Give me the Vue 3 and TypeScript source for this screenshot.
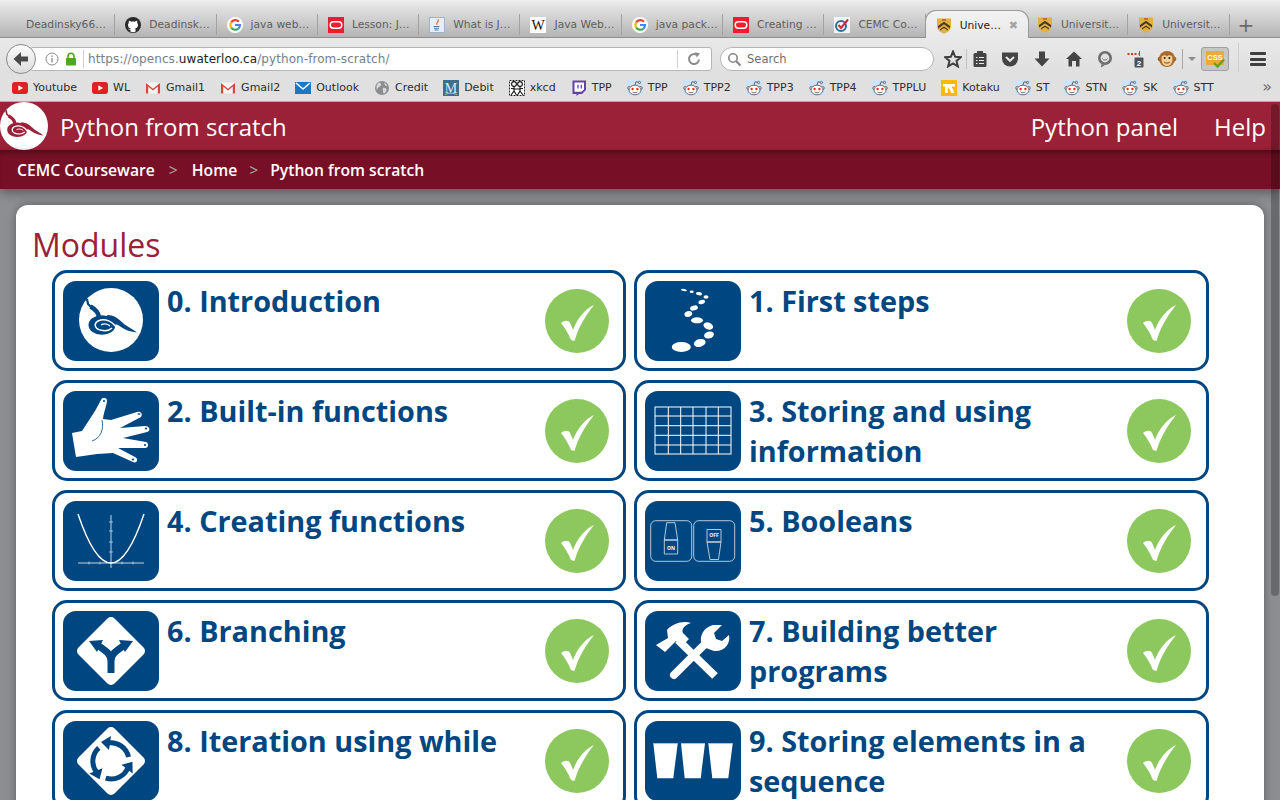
<script setup lang="ts">
interface Tab {
  title: string
  icon?: string
  active?: boolean
}

interface Bookmark {
  label: string
  icon: string
}

interface Module {
  title: string
  icon: string
}

const tabs: Tab[] = [
  { title: 'Deadinsky66…' },
  { title: 'Deadinsk…', icon: 'fav-github' },
  { title: 'java web…', icon: 'fav-google' },
  { title: 'Lesson: J…', icon: 'fav-oracle' },
  { title: 'What is J…', icon: 'fav-java' },
  { title: 'Java Web…', icon: 'fav-wiki' },
  { title: 'java pack…', icon: 'fav-google' },
  { title: 'Creating …', icon: 'fav-oracle' },
  { title: 'CEMC Co…', icon: 'fav-cemc' },
  { title: 'Unive…', icon: 'fav-shield', active: true },
  { title: 'Universit…', icon: 'fav-shield' },
  { title: 'Universit…', icon: 'fav-shield' },
]

const bookmarks: Bookmark[] = [
  { label: 'Youtube', icon: 'fav-youtube' },
  { label: 'WL', icon: 'fav-youtube' },
  { label: 'Gmail1', icon: 'fav-gmail' },
  { label: 'Gmail2', icon: 'fav-gmail' },
  { label: 'Outlook', icon: 'fav-outlook' },
  { label: 'Credit', icon: 'fav-globe' },
  { label: 'Debit', icon: 'fav-debit' },
  { label: 'xkcd', icon: 'fav-xkcd' },
  { label: 'TPP', icon: 'fav-twitch' },
  { label: 'TPP', icon: 'fav-reddit' },
  { label: 'TPP2', icon: 'fav-reddit' },
  { label: 'TPP3', icon: 'fav-reddit' },
  { label: 'TPP4', icon: 'fav-reddit' },
  { label: 'TPPLU', icon: 'fav-reddit' },
  { label: 'Kotaku', icon: 'fav-kotaku' },
  { label: 'ST', icon: 'fav-reddit' },
  { label: 'STN', icon: 'fav-reddit' },
  { label: 'SK', icon: 'fav-reddit' },
  { label: 'STT', icon: 'fav-reddit' },
]

const modules: Module[] = [
  { title: '0. Introduction', icon: 'mod-snake' },
  { title: '1. First steps', icon: 'mod-steps' },
  { title: '2. Built-in functions', icon: 'mod-hand' },
  { title: '3. Storing and using information', icon: 'mod-grid' },
  { title: '4. Creating functions', icon: 'mod-parabola' },
  { title: '5. Booleans', icon: 'mod-switch' },
  { title: '6. Branching', icon: 'mod-branch' },
  { title: '7. Building better programs', icon: 'mod-tools' },
  { title: '8. Iteration using while', icon: 'mod-loop' },
  { title: '9. Storing elements in a sequence', icon: 'mod-cups' },
]
</script>

<template>
  <div class="window">
    <svg class="sprites" aria-hidden="true">
      <defs>
        <symbol id="snake" viewBox="0 0 64 64">
          <path d="M8 11 L9 16 L12 19" fill="none" stroke="currentColor" stroke-width="2.2" />
          <path d="M11.5 18.5 C15 20.5 19 23 20 29" fill="none" stroke="currentColor" stroke-width="4.4" />
          <path d="M28 27 C36 27 41 32 45 36 C49 39 53 41 58 44.5 C52 44 46 42 42 39 C38 36 34 35 30 35 Z" fill="currentColor" />
          <ellipse cx="23" cy="37" rx="13.5" ry="9.8" fill="currentColor" />
          <path d="M38 41 C34 33 26 30 19 33 C14 36 16 42 24 42.5 C28 43 31 42 33 40" fill="none" stroke="var(--snake-bg)" stroke-width="1.5" />
          <path d="M22 37 C25 35 29 36 31 38" fill="none" stroke="var(--snake-bg)" stroke-width="1.2" />
        </symbol>

        <symbol id="mod-snake" viewBox="0 0 96 80">
          <circle cx="48" cy="39" r="32" fill="#fff" />
          <use href="#snake" x="16" y="7" width="64" height="64" style="color:#004680;--snake-bg:#fff" />
        </symbol>
        <symbol id="mod-steps" viewBox="0 0 96 80">
          <g fill="#fff">
            <ellipse cx="36.3" cy="66" rx="9.5" ry="5" />
            <ellipse cx="54.7" cy="62" rx="6" ry="3.8" transform="rotate(-15 54.7 62)" />
            <ellipse cx="64" cy="54" rx="5" ry="3.4" transform="rotate(-15 64 54)" />
            <ellipse cx="63.3" cy="45" rx="5" ry="3.4" transform="rotate(20 63.3 45)" />
            <ellipse cx="52" cy="39.3" rx="6" ry="3" />
            <ellipse cx="43.3" cy="33" rx="4" ry="2.8" transform="rotate(-20 43.3 33)" />
            <ellipse cx="49" cy="27" rx="4" ry="2.4" transform="rotate(-15 49 27)" />
            <ellipse cx="56.7" cy="21" rx="3.4" ry="2.1" transform="rotate(-15 56.7 21)" />
            <ellipse cx="61" cy="16" rx="2.5" ry="1.7" />
            <ellipse cx="54" cy="12.7" rx="3" ry="1.6" transform="rotate(10 54 12.7)" />
            <ellipse cx="46.7" cy="10.7" rx="2" ry="1.2" />
            <ellipse cx="39" cy="9" rx="3" ry="1" transform="rotate(12 39 9)" />
          </g>
        </symbol>
        <symbol id="mod-hand" viewBox="0 0 96 80">
          <path fill="#fff" d="M9 42 L19 40 L32 20 L38 9 C39 6 43 6 44 9 C44 14 41 20 40 28 L48 29 L74 21 C78 20 80 23 78 26 L57 37 L82 35 C87 35 88 40 84 41 L60 47 L83 51 C86 52 86 57 82 57 L55 57 L72 66 C76 68 74 73 70 71 L50 62 L34 63 L13 66 Z" />
          <path fill="none" stroke="#004680" stroke-width="0.8" d="M39 29 C41 38 38 47 29 50" />
          <g fill="#004680">
            <circle cx="41" cy="10" r="1" />
            <ellipse cx="76" cy="23" rx="1.6" ry="0.8" />
            <circle cx="83" cy="37.5" r="1.1" />
            <circle cx="82" cy="54" r="1.1" />
            <circle cx="70" cy="68.5" r="1.1" />
          </g>
        </symbol>
        <symbol id="mod-grid" viewBox="0 0 96 80">
          <g fill="none" stroke="#fff" stroke-width="1">
            <rect x="10" y="16" width="76" height="47" />
            <path d="M23.3 16V63M35.7 16V63M48 16V63M61 16V63M73.3 16V63M10 25H86M10 34.7H86M10 44.3H86M10 54H86" />
          </g>
        </symbol>
        <symbol id="mod-parabola" viewBox="0 0 96 80">
          <path d="M48 14V67M15 62H81" fill="none" stroke="#c8d5e2" stroke-width="1" />
          <path d="M26 60.5V63.5M37 60.5V63.5M59 60.5V63.5M70 60.5V63.5M46 21H50M46 30H50M46 41H50M46 51H50" fill="none" stroke="#c8d5e2" stroke-width="0.8" />
          <path d="M15 13 Q48 111 81 13" fill="none" stroke="#fff" stroke-width="1.4" />
        </symbol>
        <symbol id="mod-switch" viewBox="0 0 96 80">
          <g fill="none" stroke="#c8d5e2" stroke-width="0.9">
            <rect x="5.7" y="19.7" width="41" height="40.6" rx="5" />
            <rect x="48.7" y="19.7" width="41" height="40.6" rx="5" />
            <path d="M21.7 21.7H30L32.7 39V53H19.3V39Z" />
            <path d="M19.3 39H32.7" stroke-width="1.6" />
            <path d="M62 28.5H76V41L73.5 58.5H65L62 41Z" />
            <path d="M62 41H76" stroke-width="1.6" />
          </g>
          <text x="26" y="49" class="switch-label">ON</text>
          <text x="69" y="36" class="switch-label">OFF</text>
        </symbol>
        <symbol id="mod-branch" viewBox="0 0 96 80">
          <rect x="22.5" y="14.5" width="51" height="51" rx="5" fill="#fff" transform="rotate(45 48 40)" />
          <path d="M48 62V50C48 42 41 39 33 33M48 50C48 42 55 39 63 33" fill="none" stroke="#004680" stroke-width="7" />
          <path d="M26 30L40 29L34 41ZM70 30L56 29L62 41Z" fill="#004680" />
        </symbol>
        <symbol id="mod-tools" viewBox="0 0 96 80">
          <g fill="#fff">
            <path d="M11 34 L23 27 L22 19 C27 13 38 9 46 12 C40 14 36 18 38 22 L44 28 L37 35 L31 30 L20 41 Z" />
            <path d="M33 29 L70 65" stroke="#fff" stroke-width="8" />
            <path d="M29 64 L62 31" stroke="#fff" stroke-width="8" stroke-linecap="round" />
            <path d="M58 36 C53 28 57 17 68 14 L77 14 L69 22 L71 28 L77 30 L84 24 C86 33 79 41 69 40 Z" />
          </g>
        </symbol>
        <symbol id="mod-loop" viewBox="0 0 96 80">
          <rect x="22.5" y="14.5" width="51" height="51" rx="5" fill="#fff" transform="rotate(45 48 40)" />
          <g id="loop-arrow" fill="#004680">
            <path d="M65.5 36 A18 18 0 0 0 45 22" fill="none" stroke="#004680" stroke-width="5" />
            <path d="M38 21 L48 15 L46 29 Z" />
          </g>
          <use href="#loop-arrow" transform="rotate(-120 48 40)" />
          <use href="#loop-arrow" transform="rotate(120 48 40)" />
        </symbol>
        <symbol id="mod-cups" viewBox="0 0 96 80">
          <g fill="#fff">
            <path d="M8.3 22.3H32.7L28.3 57.3H12.3Z" />
            <path d="M36 22.3H60L55.7 57.3H39.7Z" />
            <path d="M63.3 22.3H87.7L83.3 57.3H67.3Z" />
          </g>
          <path d="M8.3 22.6H32.7M36 22.6H60M63.3 22.6H87.7" stroke="#9fb9d0" stroke-width="0.7" />
        </symbol>

        <symbol id="fav-github" viewBox="0 0 16 16">
          <circle cx="8" cy="8" r="8" fill="#2a2a2a" />
          <path fill="#fff" d="M5.5 14.8V12.6C3.4 13 3 11.6 3 11.6L4.4 12C5 12.4 5.5 12 5.7 11.3C4 11 3 10 3 8C3 7.2 3.3 6.4 3.8 5.9C3.6 5.2 3.7 4.4 4 3.8C4.8 3.8 5.6 4.2 6.2 4.7C7.4 4.4 8.6 4.4 9.8 4.7C10.4 4.2 11.2 3.8 12 3.8C12.3 4.4 12.4 5.2 12.2 5.9C12.7 6.4 13 7.2 13 8C13 10 12 11 10.3 11.3C10.5 11.7 10.5 12.2 10.5 12.6V14.8C8.8 15.4 7.2 15.4 5.5 14.8Z" />
        </symbol>
        <symbol id="fav-google" viewBox="0 0 16 16">
          <circle cx="8" cy="8" r="8" fill="#fff" />
          <g fill="none" stroke-width="2.2">
            <path d="M11.9 4.6A5 5 0 0 0 4.2 5.4" stroke="#ea4335" />
            <path d="M4.2 5.4A5 5 0 0 0 4.2 10.6" stroke="#fbbc05" />
            <path d="M4.2 10.6A5 5 0 0 0 11.6 11.5" stroke="#34a853" />
            <path d="M11.6 11.5A5 5 0 0 0 13 8H8" stroke="#4285f4" />
          </g>
        </symbol>
        <symbol id="fav-oracle" viewBox="0 0 16 16">
          <rect width="16" height="16" fill="#ee1c2e" />
          <rect x="2.2" y="4.8" width="11.6" height="6.4" rx="3.2" fill="none" stroke="#fff" stroke-width="1.5" />
        </symbol>
        <symbol id="fav-java" viewBox="0 0 16 16">
          <rect x="0.5" y="0.5" width="15" height="15" fill="#e6edf5" stroke="#9db4cc" />
          <path d="M9 2C10 4 6.5 5 8 8C7 5.8 11 5 9 2Z" fill="#d9652b" stroke="#d9652b" stroke-width="0.5" />
          <path d="M4.5 9.5H10.5M5 11.3H10M5.5 13H9.5" stroke="#4a6f96" stroke-width="0.9" />
        </symbol>
        <symbol id="fav-wiki" viewBox="0 0 16 16">
          <rect width="16" height="16" fill="#fff" />
          <text x="8" y="12.5" class="wiki-w">W</text>
        </symbol>
        <symbol id="fav-cemc" viewBox="0 0 16 16">
          <rect width="16" height="16" fill="#f3f3f3" />
          <circle cx="7" cy="9" r="5" fill="none" stroke="#2a6f9e" stroke-width="2" />
          <path d="M4.5 8L7 11L14 2.5" fill="none" stroke="#d3263a" stroke-width="2" />
        </symbol>
        <symbol id="fav-shield" viewBox="0 0 16 16">
          <path d="M1 0.5H15V8C15 12 11.5 14.5 8 15.8C4.5 14.5 1 12 1 8Z" fill="#e3b040" />
          <path d="M2 8L8 3.8L14 8V10.4L8 6.2L2 10.4ZM4 11.2L8 8.4L12 11.2V12.6L8 10L4 12.6Z" fill="#46391f" />
          <path d="M6 1.4H10V2.6H6Z" fill="#b5452f" />
        </symbol>
        <symbol id="fav-youtube" viewBox="0 0 16 16">
          <rect y="2" width="16" height="12" rx="3" fill="#e02020" />
          <path d="M6.3 5.2L11 8L6.3 10.8Z" fill="#fff" />
        </symbol>
        <symbol id="fav-gmail" viewBox="0 0 16 16">
          <rect x="1" y="2.5" width="14" height="11" fill="#f4f4f4" />
          <path d="M1 13.5V3L8 8.8L15 3V13.5H12.8V6.5L8 10.5L3.2 6.5V13.5Z" fill="#d8473a" />
        </symbol>
        <symbol id="fav-outlook" viewBox="0 0 16 16">
          <rect y="2" width="16" height="12" fill="#1a78c8" />
          <path d="M1 3L8 9L15 3" fill="none" stroke="#fff" stroke-width="1.6" />
        </symbol>
        <symbol id="fav-globe" viewBox="0 0 16 16">
          <circle cx="8" cy="8" r="7" fill="#8b8d8f" />
          <path d="M5 2.5C7 3 8 4.5 6.5 6C5 7 3.5 7.5 3 10C2 8 2.5 4 5 2.5ZM9 8C11 7.5 13 8.5 12.5 10.5C12 12.5 10.5 13.5 9.5 13.5C9 12 8.5 10 9 8ZM10 2.5C11.5 3 13 4.5 13.5 6L11 5.5Z" fill="#d7d8d9" />
        </symbol>
        <symbol id="fav-debit" viewBox="0 0 16 16">
          <rect width="16" height="16" fill="#3c6e8f" />
          <text x="8" y="12.5" class="debit-m">M</text>
          <path d="M2 14.5C6 12.8 10 12.8 14 14.5" fill="none" stroke="#e5b84a" stroke-width="0.9" />
        </symbol>
        <symbol id="fav-xkcd" viewBox="0 0 16 16">
          <rect width="16" height="16" fill="#fff" />
          <g fill="none" stroke="#111" stroke-width="1.1">
            <circle cx="5" cy="4" r="2.4" />
            <circle cx="11" cy="4" r="2.4" />
            <path d="M5 6.5V11L2 15M5 11L7.5 15M2 8.5L8 9M11 6.5V11L8.5 15M11 11L14 15M8 9L14 8.5" />
          </g>
          <rect x="0.5" y="0.5" width="15" height="15" fill="none" stroke="#222" stroke-dasharray="2 1" />
        </symbol>
        <symbol id="fav-twitch" viewBox="0 0 16 16">
          <path d="M1.5 0.5H15V10L11 14H8L5.5 16V14H1.5Z" fill="#6441a4" />
          <path d="M3.5 2.5H13V9.3L10.5 11.8H3.5Z" fill="#fff" />
          <path d="M7 4.8V8.5M10.3 4.8V8.5" stroke="#6441a4" stroke-width="1.3" />
        </symbol>
        <symbol id="fav-reddit" viewBox="0 0 16 16">
          <rect width="16" height="16" fill="#cfe3f7" />
          <g stroke="#333" stroke-width="0.7" fill="#fff">
            <path d="M8 5L9 1.8L12 2.4" fill="none" />
            <circle cx="12.5" cy="2.5" r="1.1" />
            <circle cx="2.3" cy="8" r="1.5" />
            <circle cx="13.7" cy="8" r="1.5" />
            <ellipse cx="8" cy="10" rx="6" ry="4.8" />
          </g>
          <circle cx="5.6" cy="9" r="1.2" fill="#e8331c" />
          <circle cx="10.4" cy="9" r="1.2" fill="#e8331c" />
          <path d="M5.5 12C7 13 9 13 10.5 12" fill="none" stroke="#333" stroke-width="0.7" />
        </symbol>
        <symbol id="fav-kotaku" viewBox="0 0 16 16">
          <rect width="16" height="16" fill="#fcb900" />
          <path d="M2 4H14V6.5H10.5L13.5 13H10.3L8 8L6.8 9V13H4V6.5H2Z" fill="#fff" />
        </symbol>

        <symbol id="check" viewBox="0 0 64 64">
          <circle cx="32" cy="32" r="32" fill="#8cc85e" />
          <path d="M16 34 C19 31.5 22 31 24 32.5 C25.5 34.5 27 38 28 41 C32 30 40 20 49 16 C41 26 33 39 29.5 52 L26 51 C23 44 20 39 16 34 Z" fill="#fff" />
        </symbol>
      </defs>
    </svg>

    <!-- browser chrome -->
    <div class="tabbar">
      <div v-for="(tab, i) in tabs" :key="i" class="tab" :class="{ active: tab.active, plain: !tab.icon }">
        <svg v-if="tab.icon" class="favicon"><use :href="'#' + tab.icon" /></svg>
        <span class="tab-title">{{ tab.title }}</span>
        <span v-if="tab.active" class="tab-close">✖</span>
      </div>
      <span class="new-tab">+</span>
    </div>

    <div class="navbar">
      <div class="back">
        <svg width="18" height="18" viewBox="0 0 18 18">
          <path d="M1.5 9L9 2V6.5H16V11.5H9V16Z" fill="#4a4a4a" />
        </svg>
      </div>
      <div class="urlbar">
        <svg class="info" width="14" height="14" viewBox="0 0 14 14">
          <circle cx="7" cy="7" r="6" fill="none" stroke="#8b8b8b" />
          <path d="M7 6V10.5M7 3.4V4.9" stroke="#8b8b8b" stroke-width="1.3" />
        </svg>
        <svg class="lock" width="12" height="14" viewBox="0 0 12 14">
          <path d="M3 6V4.2A3 3 0 0 1 9 4.2V6" fill="none" stroke="#4ea71f" stroke-width="1.6" />
          <rect x="1" y="6" width="10" height="7.5" rx="1" fill="#4ea71f" />
        </svg>
        <span class="url-sep"></span>
        <span class="url">https://opencs.<b>uwaterloo.ca</b>/python-from-scratch/</span>
        <span class="url-sep right"></span>
        <svg class="reload" width="14" height="14" viewBox="0 0 14 14">
          <path d="M12 7.5A5 5 0 1 1 9.5 2.7" fill="none" stroke="#8a8a8a" stroke-width="2" />
          <path d="M8 0.2L13 1.2L9.8 5.4Z" fill="#8a8a8a" />
        </svg>
      </div>
      <div class="searchbar">
        <svg width="15" height="15" viewBox="0 0 15 15">
          <circle cx="6" cy="6" r="4.2" fill="none" stroke="#888" stroke-width="1.6" />
          <path d="M9 9L13.5 13.5" stroke="#888" stroke-width="2.2" />
        </svg>
        <span>Search</span>
      </div>
      <div class="tools">
        <svg class="t-star" width="18" height="18" viewBox="0 0 18 18">
          <path d="M9 1.5L11.2 6.8L16.8 7.2L12.5 10.9L13.9 16.4L9 13.4L4.1 16.4L5.5 10.9L1.2 7.2L6.8 6.8Z" fill="none" stroke="#3f3f3f" stroke-width="2" />
        </svg>
        <span class="t-sep"></span>
        <svg class="t-clip" width="16" height="18" viewBox="0 0 16 18">
          <rect x="1.5" y="3" width="13" height="14" rx="1.5" fill="#444" />
          <rect x="5" y="1" width="6" height="3.5" fill="#444" />
          <path d="M4 7.5H5.5M7 7.5H12M4 10.5H5.5M7 10.5H12M4 13.5H5.5M7 13.5H12" stroke="#e8e8e8" stroke-width="1.2" />
        </svg>
        <svg class="t-pocket" width="18" height="18" viewBox="0 0 18 18">
          <path d="M1 2.5H17V8.5A8 8 0 0 1 1 8.5Z" fill="#444" />
          <path d="M5 7L9 10.8L13 7" fill="none" stroke="#e8e8e8" stroke-width="2" />
        </svg>
        <svg class="t-down" width="18" height="18" viewBox="0 0 18 18">
          <path d="M6 1.5H12V8.5H16.5L9 16.5L1.5 8.5H6Z" fill="#444" />
        </svg>
        <svg class="t-home" width="18" height="18" viewBox="0 0 18 18">
          <path d="M9 1.5L17 9H14.5V16.5H11V11H7V16.5H3.5V9H1Z" fill="#444" />
        </svg>
        <svg class="t-chat" width="18" height="18" viewBox="0 0 18 18">
          <circle cx="9" cy="8" r="7" fill="#6f6f6f" />
          <path d="M5.5 14L5 17.5L9 15Z" fill="#6f6f6f" />
          <circle cx="9" cy="8" r="4.4" fill="#e0e0e0" />
          <path d="M6.5 8.5C7.5 10.5 10.5 10.5 11.5 8.5" fill="none" stroke="#6f6f6f" />
        </svg>
        <svg class="t-count" width="18" height="18" viewBox="0 0 18 18">
          <path d="M0.5 4H2.5M4 4H6M7.5 4H9.5M11.5 4H13" stroke="#d8302a" stroke-width="2" />
          <path d="M12.5 1V6" stroke="#d8302a" stroke-width="1" />
          <rect x="7.5" y="7.5" width="9" height="10" rx="1" fill="#4a5560" />
          <text x="12" y="16" class="count-num">2</text>
        </svg>
        <svg class="t-monkey" width="20" height="20" viewBox="0 0 20 20">
          <circle cx="2.8" cy="10" r="2.2" fill="#a8692a" />
          <circle cx="17.2" cy="10" r="2.2" fill="#a8692a" />
          <circle cx="10" cy="10" r="8" fill="#a8692a" />
          <path d="M4.5 9C4.5 6 8.5 5.5 10 7.5C11.5 5.5 15.5 6 15.5 9C15.5 14 13.5 17 10 17C6.5 17 4.5 14 4.5 9Z" fill="#f2d097" />
          <circle cx="7.6" cy="9" r="1" fill="#222" />
          <circle cx="12.4" cy="9" r="1" fill="#222" />
          <path d="M7 13C8.5 14.5 11.5 14.5 13 13" fill="none" stroke="#7a4a1c" />
        </svg>
        <span class="t-sep dark"></span>
        <span class="t-caret"></span>
        <div class="t-css">
          <svg width="20" height="20" viewBox="0 0 20 20">
            <rect x="1" y="2" width="18" height="14" fill="#eda93a" />
            <text x="10" y="11" class="css-label">CSS</text>
            <path d="M9 14L12.5 17.5L19 10.5" fill="none" stroke="#5fa32a" stroke-width="2.4" />
          </svg>
        </div>
        <span class="t-sep tall"></span>
        <div class="t-menu"><i></i><i></i><i></i></div>
      </div>
    </div>

    <div class="bookmarks">
      <div v-for="(mark, i) in bookmarks" :key="i" class="mark">
        <svg class="favicon"><use :href="'#' + mark.icon" /></svg>
        <span>{{ mark.label }}</span>
      </div>
      <span class="more">»</span>
    </div>

    <!-- page -->
    <div class="page">
      <header class="site-head">
        <div class="brand">
          <svg class="logo" width="48" height="48" viewBox="0 0 48 48">
            <circle cx="24" cy="24" r="24" fill="#fff" />
            <use href="#snake" x="0" y="0" width="48" height="48" style="color:#9b2139;--snake-bg:#fff" />
          </svg>
          <span class="brand-name">Python from scratch</span>
        </div>
        <nav class="site-nav">
          <a>Python panel</a>
          <a>Help</a>
        </nav>
      </header>
      <div class="crumbs">
        <a>CEMC Courseware</a>
        <span class="gt">&gt;</span>
        <a>Home</a>
        <span class="gt last">&gt;</span>
        <a>Python from scratch</a>
      </div>

      <main class="panel">
        <h1>Modules</h1>
        <div class="module-grid">
          <div v-for="mod in modules" :key="mod.icon" class="module">
            <svg class="module-icon"><use :href="'#' + mod.icon" /></svg>
            <h2>{{ mod.title }}</h2>
            <svg class="module-check"><use href="#check" /></svg>
          </div>
        </div>
      </main>

      <div class="scrollbar"></div>
    </div>
  </div>
</template>

<style>
html,
body {
  margin: 0;
  overflow: hidden;
}
</style>

<style scoped>
.window {
  width: 1280px;
  height: 800px;
  overflow: hidden;
  display: flex;
  flex-direction: column;
  font-family: "DejaVu Sans", sans-serif;
  background: #8d8e91;
}

.sprites {
  position: absolute;
  width: 0;
  height: 0;
}

.favicon {
  width: 16px;
  height: 16px;
  flex: none;
}

/* tabs */
.tabbar {
  height: 38px;
  flex: none;
  box-sizing: border-box;
  padding: 14px 0 0 14px;
  display: flex;
  align-items: stretch;
  background: linear-gradient(#f0f0f0, #e4e4e4 15%, #b4b4b4);
  border-bottom: 1px solid #8f8f8f;
}

.tab {
  width: 101.3px;
  box-sizing: border-box;
  padding: 0 0 0 10px;
  display: flex;
  align-items: center;
  gap: 8px;
  font-size: 10.7px;
  color: #5e5e5e;
  white-space: nowrap;
  border-right: 1px solid #a2a2a2;
  margin-bottom: 2px;
}

.tab.plain {
  padding-left: 12px;
}

.tab.active {
  margin: -4px -2px -1px -1px;
  width: 104.3px;
  color: #222;
  background: linear-gradient(#f2f2f2, #e9e9e9);
  border: 1px solid #9a9a9a;
  border-bottom: none;
  border-radius: 11px 11px 0 0;
  padding: 2px 0 0 10px;
  z-index: 1;
}

.tab-close {
  margin-left: auto;
  margin-right: 11px;
  font-size: 11px;
  color: #a4a4a4;
}

.new-tab {
  margin-left: 8px;
  font-size: 20px;
  line-height: 22px;
  color: #6a6a6a;
}

/* toolbar */
.navbar {
  height: 34px;
  flex: none;
  box-sizing: border-box;
  padding-top: 9px;
  display: flex;
  align-items: flex-start;
  background: linear-gradient(#e9e9e9, #e0e0e0);
  position: relative;
}

.back {
  position: absolute;
  left: 6px;
  top: 6px;
  width: 30px;
  height: 30px;
  box-sizing: border-box;
  display: flex;
  align-items: center;
  justify-content: center;
  border-radius: 50%;
  border: 1px solid #8a8a8a;
  background: linear-gradient(#fbfbfb, #dcdcdc);
  z-index: 1;
}

.urlbar {
  margin-left: 30px;
  width: 682px;
  height: 24px;
  flex: none;
  box-sizing: border-box;
  padding-left: 14px;
  display: flex;
  align-items: center;
  background: #fff;
  border: 1px solid #b5b5b5;
  border-radius: 3px;
}

.lock {
  margin-left: 6px;
}

.url-sep {
  width: 1px;
  height: 18px;
  margin: 0 4px 0 6px;
  background: #cfcfcf;
}

.url-sep.right {
  margin: 0 9px 0 auto;
}

.url {
  font-size: 12px;
  letter-spacing: 0.08px;
  color: #73808c;
  white-space: nowrap;
}

.url b {
  font-weight: 400;
  color: #222;
}

.reload {
  margin-right: 10px;
}

.searchbar {
  margin-left: 8px;
  width: 214px;
  height: 24px;
  flex: none;
  box-sizing: border-box;
  padding-left: 6px;
  display: flex;
  align-items: center;
  gap: 5px;
  font-size: 11.5px;
  color: #6f6f6f;
  background: #fff;
  border: 1px solid #b5b5b5;
  border-radius: 12px;
}

.tools {
  flex: 1;
  height: 24px;
  display: flex;
  align-items: center;
  padding-left: 10px;
}

.t-sep {
  width: 1px;
  height: 20px;
  background: #c4c4c4;
  margin: 0 5px 0 4px;
}

.t-sep.dark {
  margin: 0 3px 0 5px;
  background: #a8a8a8;
}

.t-sep.tall {
  height: 32px;
  margin: 0 0 0 9px;
  background: #cfcfcf;
}

.t-pocket {
  margin-left: 13px;
}

.t-down {
  margin-left: 14px;
}

.t-home {
  margin-left: 14px;
}

.t-chat {
  margin-left: 13px;
}

.t-count {
  margin-left: 13px;
}

.t-monkey {
  margin-left: 12px;
}

.t-caret {
  width: 0;
  height: 0;
  margin: 0 5px 0 2px;
  border-left: 4px solid transparent;
  border-right: 4px solid transparent;
  border-top: 4px solid #8b8b8b;
}

.t-css {
  width: 28px;
  height: 24px;
  flex: none;
  box-sizing: border-box;
  display: flex;
  align-items: center;
  justify-content: center;
  background: #c6c6c6;
  border: 1px solid #a0a0a0;
  border-radius: 3px;
}

.t-menu {
  margin-left: 11px;
  width: 16px;
  display: flex;
  flex-direction: column;
  gap: 2.5px;
}

.t-menu i {
  display: block;
  height: 3px;
  border-radius: 1px;
  background: #3f3f3f;
}

/* bookmarks */
.bookmarks {
  height: 30px;
  flex: none;
  box-sizing: border-box;
  padding: 2px 0 0 12px;
  display: flex;
  align-items: center;
  gap: 15px;
  background: #e0e0e0;
  border-bottom: 1px solid #ababab;
  position: relative;
}

.mark {
  display: flex;
  align-items: center;
  gap: 5px;
  font-size: 11px;
  color: #2d2d2d;
}

.more {
  position: absolute;
  right: 8px;
  top: 5px;
  font-size: 16px;
  color: #6f6f6f;
}

/* page */
.page {
  flex: 1;
  min-height: 0;
  position: relative;
  font-family: "Open Sans", sans-serif;
  display: flex;
  flex-direction: column;
}

.site-head {
  height: 48px;
  flex: none;
  display: flex;
  align-items: center;
  justify-content: space-between;
  padding-right: 14px;
  background: #9b2139;
  color: #fff;
}

.brand {
  display: flex;
  align-items: center;
  gap: 12px;
}

.logo {
  display: block;
}

.brand-name {
  font-size: 24px;
}

.site-nav {
  display: flex;
  gap: 36px;
  font-size: 24px;
}

.crumbs {
  height: 39px;
  flex: none;
  box-sizing: border-box;
  padding-left: 17px;
  display: flex;
  align-items: center;
  font-size: 15.7px;
  font-weight: 600;
  color: #fff;
  background: #771026;
  box-shadow: inset 0 6px 6px -4px rgba(0, 0, 0, 0.4), 0 4px 10px rgba(0, 0, 0, 0.35);
  position: relative;
}

.gt {
  margin: 0 14px;
  font-weight: 400;
  color: #a9a9a9;
}

.gt.last {
  margin: 0 12px;
}

.panel {
  flex: 1;
  margin: 16px 16px 0;
  padding: 18px 0 0 16px;
  background: #fff;
  border-radius: 12px 12px 0 0;
  box-shadow: 0 0 8px rgba(0, 0, 0, 0.35);
}

h1 {
  margin: 0 0 4px;
  font-size: 32px;
  line-height: 43px;
  font-weight: 400;
  color: #9b2139;
}

.module-grid {
  margin-left: 20px;
  width: 1157px;
  display: grid;
  grid-template-columns: 574px 575px;
  column-gap: 8px;
  row-gap: 9px;
}

.module {
  height: 101px;
  box-sizing: border-box;
  padding: 8px 14px 8px 8px;
  display: flex;
  align-items: flex-start;
  border: 3px solid #004680;
  border-radius: 15px;
}

.module:nth-child(even) {
  padding-right: 15px;
}

.module-icon {
  width: 96px;
  height: 80px;
  flex: none;
  background: #004680;
  border-radius: 13px;
}

h2 {
  flex: 1;
  margin: 0 8px;
  font-size: 28.8px;
  line-height: 40px;
  font-weight: 700;
  color: #004680;
}

.module-check {
  width: 64px;
  height: 64px;
  flex: none;
  align-self: center;
}

.switch-label {
  font-family: "Open Sans", sans-serif;
  font-size: 5px;
  font-weight: 700;
  fill: #fff;
  text-anchor: middle;
}

.wiki-w {
  font-family: "Liberation Serif", serif;
  font-size: 14px;
  fill: #111;
  text-anchor: middle;
}

.debit-m {
  font-family: "Liberation Serif", serif;
  font-size: 14px;
  fill: #dbe8f2;
  text-anchor: middle;
}

.count-num {
  font-family: "Liberation Sans", sans-serif;
  font-size: 8px;
  font-weight: 700;
  fill: #fff;
  text-anchor: middle;
}

.css-label {
  font-family: "Liberation Sans", sans-serif;
  font-size: 7.5px;
  font-weight: 700;
  fill: #fff;
  text-anchor: middle;
}

.scrollbar {
  position: absolute;
  right: 1px;
  top: 2px;
  width: 8px;
  height: 492px;
  border-radius: 4px;
  background: rgba(0, 0, 0, 0.25);
}
</style>
